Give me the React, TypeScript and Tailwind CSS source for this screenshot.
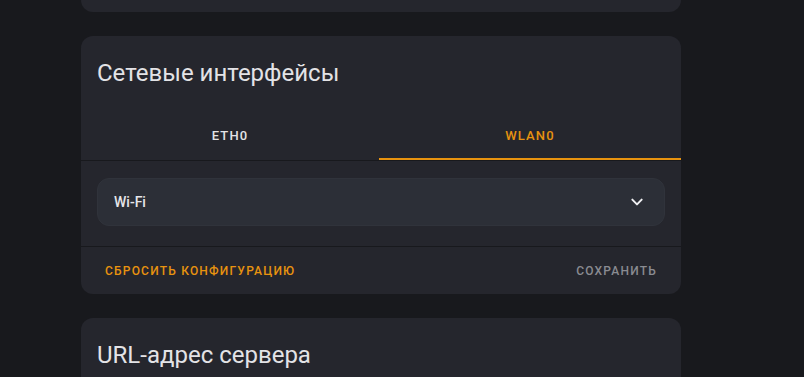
import { useState } from "react";

const TABS = ["eth0", "wlan0"];

function Card({ title, children }: { title: string; children?: React.ReactNode }) {
  return (
    <div className="w-[600px] shrink-0 rounded-[12px] bg-[#25262d]">
      <h1 className="px-4 pt-[21px] text-[24px] font-normal leading-[32px] text-[#e3e3e6]">{title}</h1>
      {children}
    </div>
  );
}

export default function App() {
  const [tab, setTab] = useState(1);

  return (
    <div
      className="flex h-[377px] flex-col gap-6 overflow-hidden bg-[#18191d] pl-[81px] pt-0"
      style={{ fontFamily: "Roboto, 'Noto Sans', sans-serif" }}
    >
      {/* previous card, only its bottom edge is visible */}
      <div className="-mt-[40px] h-[52px] w-[600px] shrink-0 rounded-[12px] bg-[#25262d]" />

      <Card title="Сетевые интерфейсы">
        <div className="mt-6 flex border-b border-[#18191d]">
          {TABS.map((t, i) => (
            <button
              key={t}
              onClick={() => setTab(i)}
              className={
                "flex h-[47px] items-center justify-center border-b-2 text-[13px] font-medium uppercase tracking-[0.09em] " +
                (i === 0 ? "w-[298px] " : "flex-1 ") +
                (tab === i ? "border-[#e8930f] text-[#e8930f]" : "border-transparent text-[#e3e3e6]")
              }
            >
              {t}
            </button>
          ))}
        </div>

        <div className="px-4 pb-5 pt-[17px]">
          <div className="flex h-[48px] items-center justify-between rounded-[12px] border border-[#30333b] bg-[#2c2f37] pl-4 pr-[19px]">
            <span className="text-[14px] font-medium text-[#e6e6ea]">Wi-Fi</span>
            <svg width="16" height="16" viewBox="0 0 24 24" className="text-[#f0f0f2]">
              <path d="M5 8.5l7 7 7-7" fill="none" stroke="currentColor" strokeWidth="3" strokeLinecap="round" strokeLinejoin="round" />
            </svg>
          </div>
        </div>

        <div className="flex h-[48px] items-center justify-between border-t border-[#18191d] pl-6 pr-6">
          <button className="text-[12px] font-medium uppercase tracking-[0.1em] text-[#e8930f]">Сбросить конфигурацию</button>
          <button className="text-[12px] font-medium uppercase tracking-[0.1em] text-[#8a8b91]">Сохранить</button>
        </div>
      </Card>

      <Card title="URL-адрес сервера">
        <div className="h-[40px]" />
      </Card>
    </div>
  );
}
